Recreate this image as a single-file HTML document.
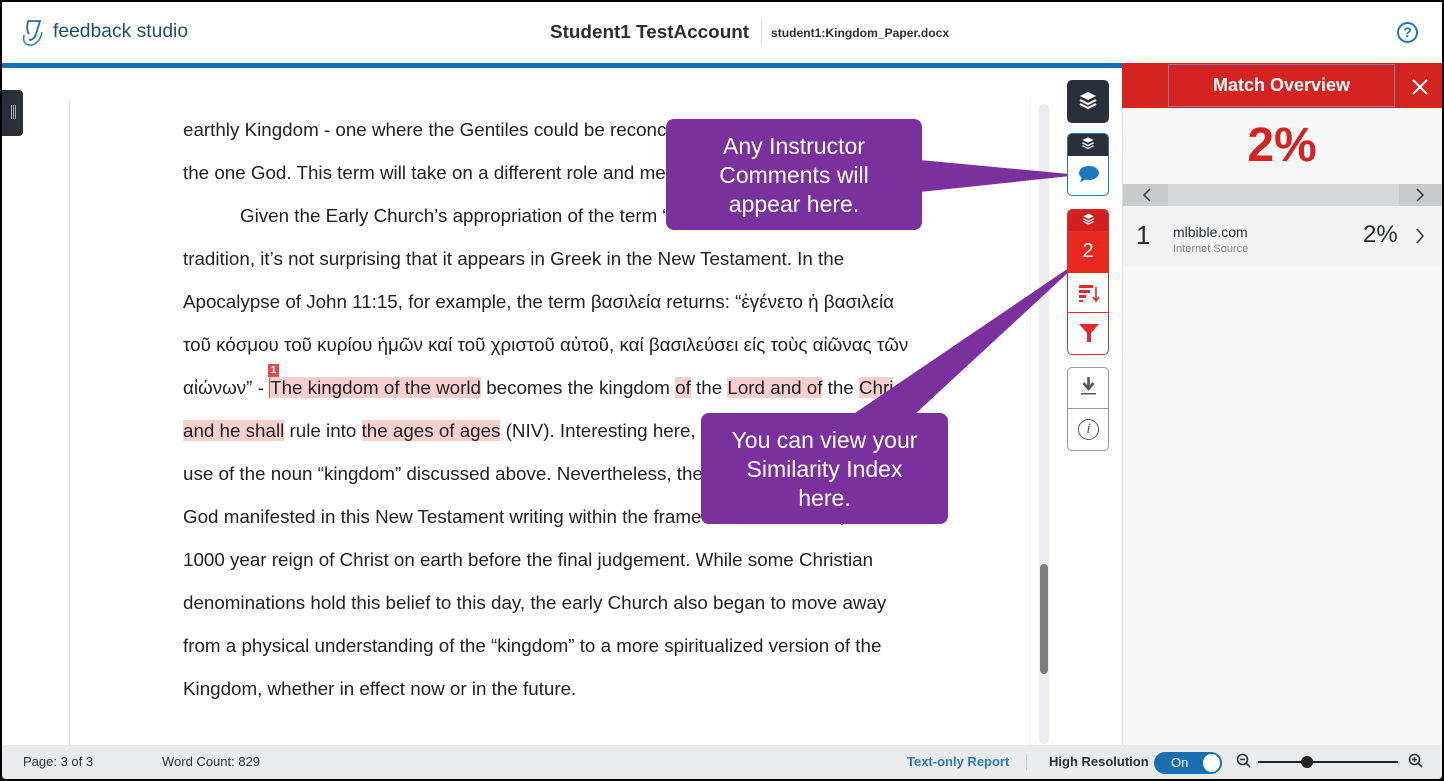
<!DOCTYPE html>
<html><head><meta charset="utf-8">
<style>
*{margin:0;padding:0;box-sizing:border-box}
body{width:1444px;height:781px;overflow:hidden;background:#000;font-family:"Liberation Sans",Arial,sans-serif;position:relative}
#frame{position:absolute;left:2px;top:2px;width:1440px;height:777px;background:#fff;overflow:hidden;border-radius:0 0 4px 4px}
.abs{position:absolute}
.line{position:absolute;left:181px;font-size:18.8px;color:#222;white-space:nowrap;line-height:22px}
.hl{background:#f8cfcf}
</style></head><body>
<div id="frame">
 <div class="abs" style="left:0;top:0;width:1440px;height:61px;background:#fff"></div>
 <svg class="abs" style="left:18px;top:16px" width="28" height="32" viewBox="0 0 28 32"><path d="M8 3 L20 3 L16 16 Q14 22 9 22 M8 3 Q6 12 9 16" fill="none" stroke="#2a6a98" stroke-width="1.8"/><path d="M4 17 Q2 28 12 27 Q20 25 22 14" fill="none" stroke="#2a8ac8" stroke-width="1.6"/></svg>
 <div class="abs" style="left:51px;top:19px;font-size:19.3px;color:#1e4e70">feedback studio</div>
 <div class="abs" style="left:548px;top:20px;font-size:18.9px;font-weight:bold;color:#2a2e33">Student1 TestAccount</div>
 <div class="abs" style="left:759px;top:18px;width:1px;height:26px;background:#ddd"></div>
 <div class="abs" style="left:769px;top:24px;font-size:12.1px;font-weight:bold;color:#2a2e33">student1:Kingdom_Paper.docx</div>
 <div class="abs" style="left:1395px;top:20px;width:21px;height:21px;border:2px solid #1a78c2;border-radius:50%;color:#1a78c2;font-size:14px;font-weight:bold;text-align:center;line-height:17px">?</div>
 <div class="abs" style="left:0;top:61px;width:1120px;height:5px;background:#1a6fb3"></div>

 <div class="abs" style="left:0;top:88px;width:21px;height:46px;background:#2a303a;border-radius:0 4px 4px 0"></div>
 <div class="abs" style="left:9px;top:103px;width:1px;height:14px;background:#aaa;box-shadow:2px 0 #aaa,4px 0 #aaa"></div>
 <div class="abs" style="left:67px;top:98px;width:1px;height:645px;background:#ddd"></div>
 <div class="abs" style="left:1028px;top:98px;width:1px;height:645px;background:#eee"></div>
 <div class="abs" style="left:1037px;top:102px;width:10px;height:640px;background:#ececee;border-radius:5px"></div>
 <div class="abs" style="left:1038px;top:562px;width:8px;height:110px;background:#7d7d7d;border-radius:4px"></div>

 <div class="line" style="top:117px">earthly Kingdom - one where the Gentiles could be reconc</div>
 <div class="line" style="top:160px">the one God. This term will take on a different role and me</div>
 <div class="line" style="top:203px"><span style="display:inline-block;width:57px"></span>Given the Early Church’s appropriation of the term “</div>
 <div class="line" style="top:246px">tradition, it’s not surprising that it appears in Greek in the New Testament. In the</div>
 <div class="line" style="top:289px">Apocalypse of John 11:15, for example, the term βασιλεία returns: “ἐγένετο ἡ βασιλεία</div>
 <div class="line" style="top:332px">τοῦ κόσμου τοῦ κυρίου ἡμῶν καί τοῦ χριστοῦ αὐτοῦ, καί βασιλεύσει είς τοὺς αἰῶνας τῶν</div>
 <div class="abs" style="left:266px;top:362px;width:11px;height:13px;background:#e24c4c;color:#fff;font-size:10px;font-weight:bold;text-align:center;line-height:13px">1</div>
 <div class="line" style="top:375px">αἰώνων” - <span class="hl" style="border-left:1px solid #e24c4c">The kingdom of the world</span> becomes the kingdom <span class="hl">of</span> the <span class="hl">Lord and of</span> the <span class="hl">Chri</span></div>
 <div class="line" style="top:418px"><span class="hl">and he shall</span> rule into <span class="hl">the ages of ages</span> (NIV). Interesting here,</div>
 <div class="line" style="top:461px">use of the noun “kingdom” discussed above. Nevertheless, the</div>
 <div class="line" style="top:504px">God manifested in this New Testament writing within the framework of Chiliasm, the</div>
 <div class="line" style="top:547px">1000 year reign of Christ on earth before the final judgement. While some Christian</div>
 <div class="line" style="top:590px">denominations hold this belief to this day, the early Church also began to move away</div>
 <div class="line" style="top:633px">from a physical understanding of the “kingdom” to a more spiritualized version of the</div>
 <div class="line" style="top:676px">Kingdom, whether in effect now or in the future.</div>

 <svg class="abs" style="left:0;top:0" width="1100" height="560">
  <rect x="664" y="117" width="256" height="111" rx="8" fill="#7a309d"/>
  <polygon points="918,158 1078,173 918,190" fill="#7a309d"/>
  <rect x="699" y="411" width="247" height="111" rx="8" fill="#7a309d"/>
  <polygon points="850,413 1083,255 912,413" fill="#7a309d"/>
 </svg>
 <div class="abs" style="left:664px;top:130px;width:256px;text-align:center;color:#fff;font-size:23px;line-height:29px">Any Instructor<br>Comments will<br>appear here.</div>
 <div class="abs" style="left:699px;top:424px;width:247px;text-align:center;color:#fff;font-size:23px;line-height:29px">You can view your<br>Similarity Index<br>here.</div>

 <div class="abs" style="left:1065px;top:78px;width:42px;height:43px;background:#2a303a;border-radius:5px"></div>
 <svg class="abs" style="left:1076px;top:88px" width="20" height="22" viewBox="0 0 20 22"><path d="M10 2 L18 6 L10 10 L2 6Z" fill="#fff"/><path d="M2 10 L10 14 L18 10 M2 14 L10 18 L18 14" fill="none" stroke="#fff" stroke-width="2"/></svg>
 <div class="abs" style="left:1065px;top:131px;width:42px;height:63px;border:1px solid #1a78c2;border-radius:5px;overflow:hidden;background:#fff"><div style="height:22px;background:#2a303a"></div></div>
 <svg class="abs" style="left:1079px;top:133px" width="14" height="17" viewBox="0 0 20 22"><path d="M10 2 L18 6 L10 10 L2 6Z" fill="#fff"/><path d="M2 10 L10 14 L18 10 M2 14 L10 18 L18 14" fill="none" stroke="#fff" stroke-width="2"/></svg>
 <svg class="abs" style="left:1076px;top:163px" width="22" height="18" viewBox="0 0 22 18"><ellipse cx="11" cy="8" rx="10" ry="7" fill="#1a78c2"/><path d="M4 12 L2 17 L9 14Z" fill="#1a78c2"/></svg>

 <div class="abs" style="left:1065px;top:207px;width:42px;height:146px;border:1px solid #e12b2b;border-radius:5px;overflow:hidden;background:#fff">
  <div style="height:21px;background:#d02020"></div>
  <div style="height:42px;background:#e8291f;color:#fff;font-size:20px;text-align:center;line-height:40px">2</div>
  <div style="height:40px;border-bottom:1px solid #e12b2b"></div>
 </div>
 <svg class="abs" style="left:1080px;top:210px" width="13" height="15" viewBox="0 0 20 22"><path d="M10 2 L18 6 L10 10 L2 6Z" fill="#fff"/><path d="M2 10 L10 14 L18 10 M2 14 L10 18 L18 14" fill="none" stroke="#fff" stroke-width="2"/></svg>
 <svg class="abs" style="left:1076px;top:281px" width="22" height="20" viewBox="0 0 22 20"><rect x="1" y="2" width="14" height="3" fill="#e12b2b"/><rect x="1" y="7" width="11" height="3" fill="#e12b2b"/><rect x="1" y="12" width="7" height="3" fill="#e12b2b"/><rect x="1" y="17" width="4" height="2" fill="#e12b2b"/><path d="M18 4 V17 M15 14 L18 18 L21 14" stroke="#e12b2b" stroke-width="1.6" fill="none"/></svg>
 <svg class="abs" style="left:1077px;top:322px" width="20" height="18" viewBox="0 0 20 18"><path d="M0 0 H20 L12 9 V18 H8 V9Z" fill="#e12b2b"/></svg>

 <div class="abs" style="left:1065px;top:365px;width:42px;height:84px;border:1px solid #999;border-radius:5px;background:#fff"><div style="height:41px;border-bottom:1px solid #999"></div></div>
 <svg class="abs" style="left:1078px;top:374px" width="17" height="20" viewBox="0 0 17 20"><path d="M8.5 1 V12 M3.5 7 L8.5 13 L13.5 7" stroke="#555" stroke-width="2.6" fill="none"/><rect x="1" y="17" width="15" height="1.5" fill="#555"/></svg>
 <div class="abs" style="left:1076px;top:417px;width:21px;height:21px;border:1.5px solid #555;border-radius:50%;font-family:'Liberation Serif',serif;font-style:italic;font-size:15px;color:#555;text-align:center;line-height:19px">i</div>

 <div class="abs" style="left:1120px;top:61px;width:320px;height:683px;background:#f7f7f8;border-left:1px solid #ddd"></div>
 <div class="abs" style="left:1120px;top:61px;width:320px;height:45px;background:#d42320"></div>
 <div class="abs" style="left:1166px;top:62px;width:227px;height:43px;background:#d42320;border:1px solid #8a7aa8;color:#fff;font-size:18px;font-weight:bold;text-align:center;line-height:41px">Match Overview</div>
 <div class="abs" style="left:1396px;top:61px;width:1px;height:45px;background:#c01c18"></div>
 <svg class="abs" style="left:1410px;top:77px" width="16" height="16"><path d="M1 1 L15 15 M15 1 L1 15" stroke="#fff" stroke-width="2"/></svg>
 <div class="abs" style="left:1120px;top:114px;width:320px;text-align:center;font-size:48px;font-weight:bold;color:#d42320;line-height:60px">2%</div>
 <div class="abs" style="left:1121px;top:182px;width:319px;height:22px;background:#d6d7da"></div>
 <div class="abs" style="left:1121px;top:182px;width:45px;height:22px;background:#c9cacd"></div>
 <div class="abs" style="left:1397px;top:182px;width:43px;height:22px;background:#c9cacd"></div>
 <svg class="abs" style="left:1140px;top:186px" width="10" height="14"><path d="M8 1 L2 7 L8 13" stroke="#333" stroke-width="1.5" fill="none"/></svg>
 <svg class="abs" style="left:1413px;top:186px" width="10" height="14"><path d="M2 1 L8 7 L2 13" stroke="#333" stroke-width="1.5" fill="none"/></svg>
 <div class="abs" style="left:1121px;top:204px;width:319px;height:60px;background:#f2f2f3"></div>
 <div class="abs" style="left:1134px;top:218px;font-size:26px;color:#2a2e33">1</div>
 <div class="abs" style="left:1171px;top:222px;font-size:14px;color:#2a2e33">mlbible.com</div>
 <div class="abs" style="left:1171px;top:241px;font-size:11px;color:#888">Internet Source</div>
 <div class="abs" style="left:1361px;top:219px;font-size:24px;color:#2a2e33">2%</div>
 <svg class="abs" style="left:1413px;top:226px" width="10" height="16"><path d="M2 1 L8 8 L2 15" stroke="#333" stroke-width="1.5" fill="none"/></svg>

 <div class="abs" style="left:0;top:743px;width:1440px;height:34px;background:#eaebed"></div>
 <div class="abs" style="left:21px;top:752px;font-size:13px;color:#333">Page: 3 of 3</div>
 <div class="abs" style="left:160px;top:752px;font-size:13px;color:#333">Word Count: 829</div>
 <div class="abs" style="left:905px;top:752px;font-size:13px;font-weight:bold;color:#2a7ac0">Text-only Report</div>
 <div class="abs" style="left:1024px;top:752px;width:1px;height:16px;background:#ccc"></div>
 <div class="abs" style="left:1047px;top:752px;font-size:13px;font-weight:bold;color:#2a2e33">High Resolution</div>
 <div class="abs" style="left:1152px;top:750px;width:68px;height:22px;background:#1a6fb3;border-radius:11px;color:#fff;font-size:13px;line-height:22px;padding-left:17px">On</div>
 <div class="abs" style="left:1201px;top:752px;width:17px;height:18px;background:#fff;border-radius:50%"></div>
 <svg class="abs" style="left:1234px;top:751px" width="16" height="16"><circle cx="6.5" cy="6.5" r="5" stroke="#333" stroke-width="1.6" fill="none"/><path d="M10 10 L14 14 M4 6.5 H9" stroke="#333" stroke-width="1.6"/></svg>
 <div class="abs" style="left:1256px;top:759px;width:140px;height:2px;background:#222"></div>
 <div class="abs" style="left:1299px;top:754px;width:12px;height:12px;background:#222;border-radius:50%"></div>
 <svg class="abs" style="left:1406px;top:751px" width="16" height="16"><circle cx="6.5" cy="6.5" r="5" stroke="#333" stroke-width="1.6" fill="none"/><path d="M10 10 L14 14 M4 6.5 H9 M6.5 4 V9" stroke="#333" stroke-width="1.6"/></svg>
</div>
</body></html>
